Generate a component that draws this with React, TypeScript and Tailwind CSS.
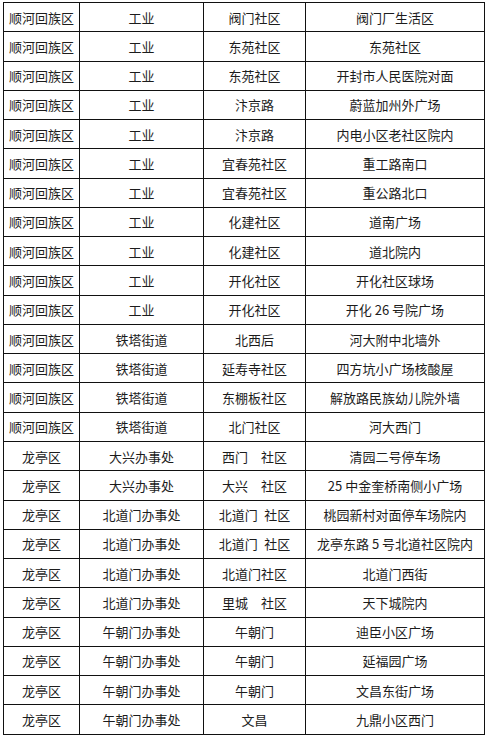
const rows: string[][] = [
  ['顺河回族区', '工业', '阀门社区', '阀门厂生活区'],
  ['顺河回族区', '工业', '东苑社区', '东苑社区'],
  ['顺河回族区', '工业', '东苑社区', '开封市人民医院对面'],
  ['顺河回族区', '工业', '汴京路', '蔚蓝加州外广场'],
  ['顺河回族区', '工业', '汴京路', '内电小区老社区院内'],
  ['顺河回族区', '工业', '宜春苑社区', '重工路南口'],
  ['顺河回族区', '工业', '宜春苑社区', '重公路北口'],
  ['顺河回族区', '工业', '化建社区', '道南广场'],
  ['顺河回族区', '工业', '化建社区', '道北院内'],
  ['顺河回族区', '工业', '开化社区', '开化社区球场'],
  ['顺河回族区', '工业', '开化社区', '开化 26 号院广场'],
  ['顺河回族区', '铁塔街道', '北西后', '河大附中北墙外'],
  ['顺河回族区', '铁塔街道', '延寿寺社区', '四方坑小广场核酸屋'],
  ['顺河回族区', '铁塔街道', '东棚板社区', '解放路民族幼儿院外墙'],
  ['顺河回族区', '铁塔街道', '北门社区', '河大西门'],
  ['龙亭区', '大兴办事处', '西门\u3000社区', '清园二号停车场'],
  ['龙亭区', '大兴办事处', '大兴\u3000社区', '25 中金奎桥南侧小广场'],
  ['龙亭区', '北道门办事处', '北道门\u2002社区', '桃园新村对面停车场院内'],
  ['龙亭区', '北道门办事处', '北道门\u2002社区', '龙亭东路 5 号北道社区院内'],
  ['龙亭区', '北道门办事处', '北道门社区', '北道门西街'],
  ['龙亭区', '北道门办事处', '里城\u3000社区', '天下城院内'],
  ['龙亭区', '午朝门办事处', '午朝门', '迪臣小区广场'],
  ['龙亭区', '午朝门办事处', '午朝门', '延福园广场'],
  ['龙亭区', '午朝门办事处', '午朝门', '文昌东街广场'],
  ['龙亭区', '午朝门办事处', '文昌', '九鼎小区西门'],
];

export default function App() {
  return (
    <div className="h-[737px] w-[488px] bg-white pl-[3px] pt-[2px]">
      <div
        className="grid w-[482px] auto-rows-[28.28px] grid-cols-[75px_123px_101px_178px] gap-px bg-[#111] p-px text-[13px] text-[#1c1c1c]"
        style={{ fontFamily: '"Noto Sans CJK SC", "Liberation Sans", sans-serif' }}
      >
        {rows.map((row, i) =>
          row.map((cell, j) => (
            <div key={`${i}-${j}`} className="flex items-center justify-center whitespace-pre bg-white leading-none">
              {cell}
            </div>
          )),
        )}
      </div>
    </div>
  );
}
